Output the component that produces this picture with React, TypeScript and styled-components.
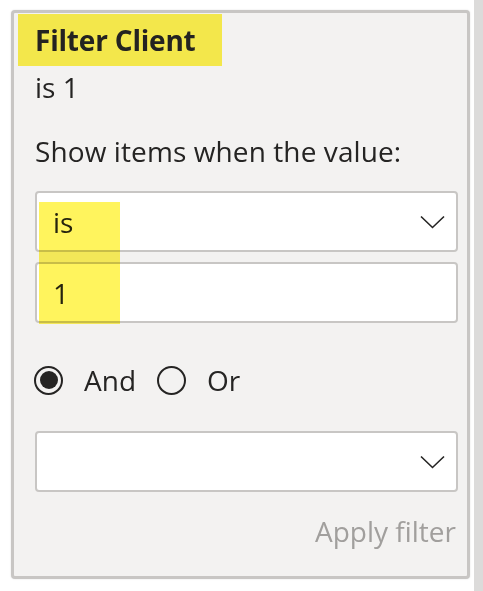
import React from 'react';
import styled, { createGlobalStyle } from 'styled-components';

const GlobalStyle = createGlobalStyle`
  html, body {
    margin: 0;
    padding: 0;
    background: #ffffff;
  }
  body {
    font-family: "Open Sans", "Noto Sans", "Liberation Sans", sans-serif;
    color: #252423;
  }
`;

const Page = styled.div`
  display: flex;
  height: 591px;
  overflow: hidden;
`;

const CardArea = styled.div`
  flex: 1;
  padding: 10px 4px 0 11px;
`;

const Scrollbar = styled.div`
  width: 9px;
  background: #dcdbda;
`;

const Card = styled.div`
  box-sizing: border-box;
  width: 459px;
  height: 569px;
  background: #f3f2f1;
  border: 3px solid #c8c6c4;
  border-radius: 4px;
  box-shadow: 0 0 2px rgba(0, 0, 0, 0.12);
  padding: 1px 9px 0 4px;
`;

const Highlight = styled.span`
  background: #fff44f;
  mix-blend-mode: multiply;
`;

const Header = styled(Highlight)`
  display: inline-block;
  height: 52px;
  line-height: 52px;
  padding: 0 26px 0 17px;
  font-size: 28px;
  font-weight: 700;
  letter-spacing: -0.2px;
`;

const Body = styled.div`
  position: relative;
  padding-left: 17px;
`;

const Summary = styled.div`
  font-size: 28px;
  line-height: 36px;
  margin-top: 3px;
`;

const Label = styled.div`
  font-size: 28px;
  line-height: 36px;
  margin-top: 28px;
  letter-spacing: 0.1px;
`;

const Field = styled.div<{ $gap: number }>`
  box-sizing: border-box;
  height: 61px;
  margin-top: ${p => p.$gap}px;
  background: #ffffff;
  border: 2px solid #c8c6c4;
  border-radius: 4px;
  display: flex;
  align-items: center;
  justify-content: space-between;
  padding: 0 11px 0 16px;
  font-size: 28px;
`;

const Chevron = styled.svg`
  width: 25px;
  height: 14px;
`;

const Marker = styled(Highlight)`
  position: absolute;
  left: 21px;
  top: 133px;
  width: 81px;
  height: 122px;
  opacity: 0.92;
`;

const RadioRow = styled.div`
  display: flex;
  align-items: center;
  margin-top: 42px;
  height: 30px;
  font-size: 28px;
`;

const RadioCircle = styled.span<{ $checked?: boolean }>`
  box-sizing: border-box;
  width: 29px;
  height: 29px;
  margin-left: -1px;
  border-radius: 50%;
  border: 2px solid #252423;
  display: flex;
  align-items: center;
  justify-content: center;
  margin-right: 21px;
  &::after {
    content: '';
    width: 18px;
    height: 18px;
    border-radius: 50%;
    background: ${p => (p.$checked ? '#252423' : 'transparent')};
  }
`;

const RadioLabel = styled.span`
  margin-right: 22px;
`;

const Apply = styled.div`
  text-align: right;
  font-size: 28px;
  line-height: 36px;
  margin-top: 21px;
  padding-right: 2px;
  color: #a19f9d;
`;

const ChevronDown = () => (
  <Chevron viewBox="0 0 25 14" fill="none">
    <path d="M1 1.5 L12.5 12.5 L24 1.5" stroke="#252423" strokeWidth="1.6" />
  </Chevron>
);

export default function App() {
  return (
    <Page>
      <GlobalStyle />
      <CardArea>
        <Card>
          <Header>Filter Client</Header>
          <Body>
            <Summary>is 1</Summary>
            <Label>Show items when the value:</Label>
            <Field $gap={22}>
              <span>is</span>
              <ChevronDown />
            </Field>
            <Field $gap={10}>
              <span>1</span>
            </Field>
            <RadioRow>
              <RadioCircle $checked />
              <RadioLabel>And</RadioLabel>
              <RadioCircle />
              <RadioLabel>Or</RadioLabel>
            </RadioRow>
            <Field $gap={36}>
              <span />
              <ChevronDown />
            </Field>
            <Apply>Apply filter</Apply>
            <Marker />
          </Body>
        </Card>
      </CardArea>
      <Scrollbar />
    </Page>
  );
}
